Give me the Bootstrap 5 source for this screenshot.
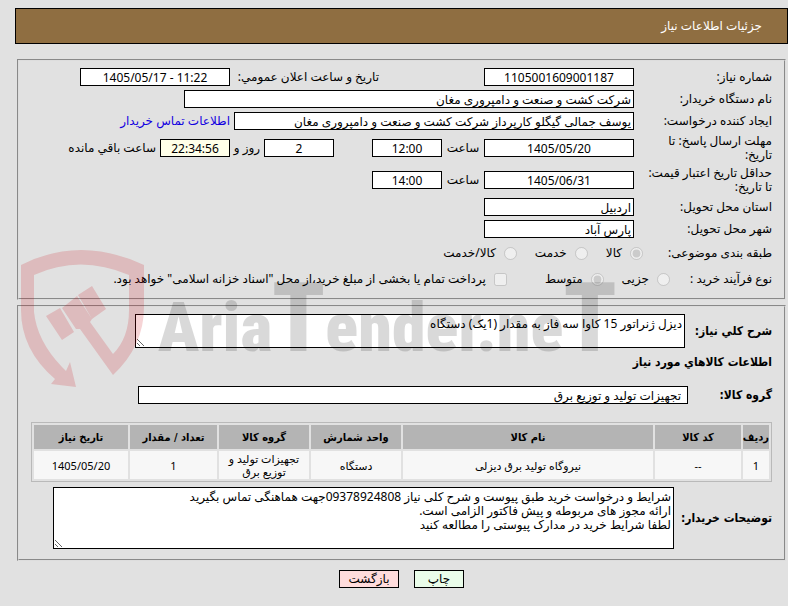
<!DOCTYPE html>
<html lang="fa" dir="rtl">
<head>
<meta charset="utf-8">
<meta name="viewport" content="width=device-width, initial-scale=1">
<title>جزئیات اطلاعات نیاز</title>
<link href="https://cdn.jsdelivr.net/npm/bootstrap@5.3.0/dist/css/bootstrap.min.css" rel="stylesheet">
<script src="https://cdn.jsdelivr.net/npm/bootstrap@5.3.0/dist/js/bootstrap.bundle.min.js" defer></script>
<style>
  body { background: #e1e1e1; color: #000; font: 12px/14px "Noto Sans", "DejaVu Sans", sans-serif; padding: 8px 0 0 15px; }
  .title-bar { background: #8f6e41; border: 1px solid #000; color: #fff; height: 36px; padding: 0 25px; }
  .panel { border: 2px groove #ddd; margin: 0 2px; padding: 5px 12px 6px; }
  .panel-need { margin-top: 15px; }
  .panel-goods { margin-top: 5px; padding: 7px 12px 10px; }
  .line { min-height: 22px; }
  .line-tall { min-height: 32px; }
  .line-choice { min-height: 26px; }
  .cap { width: 138px; flex: none; padding-left: 10px; }
  .cap-choice { width: 129px; }
  .cap-process { width: 102px; }
  .box { background: #fff; border: 1px solid #000; border-radius: 0; color: #000; height: 18px; padding: 0 2px; font-size: 12px; line-height: 16px; min-width: 0; }
  .box-date { width: 150px; text-align: center; }
  .box-short { width: 70px; text-align: center; }
  .box-place { width: 150px; }
  .box-wide { width: 450px; }
  .box-owner { width: 400px; }
  .box-group { width: 550px; padding: 0 6px; }
  .box-timer { background: #ffffe9; }
  .hour { width: 42px; text-align: center; }
  .day { width: 34px; text-align: center; }
  .announce { width: 149px; margin-right: 105px; }
  .days-box { margin-right: 38px; }
  .aside { padding-right: 4px; }
  .contact { color: #1200e0; text-decoration: none; }
  .pick { gap: 8px; margin-left: 18px; }
  .pick input { margin: 0; width: 13px; height: 13px; }
  .pick-bonds { margin-right: 20px; margin-left: 0; }
  .strong-cap { font-family: "DejaVu Sans Condensed", "DejaVu Sans", sans-serif; font-weight: 700; flex: none; }
  .goods-title { font-size: 12px; line-height: 14px; margin: 7px 0 15px; }
  .cap-desc { width: 87px; }
  .cap-group { width: 84px; }
  .cap-notes { width: 98px; }
  textarea.box { height: auto; padding: 2px; line-height: 14px; overflow: hidden; resize: both; }
  .area-desc { width: 550px; min-height: 34px; }
  .area-notes { width: 621px; min-height: 62px; }
  .goods { border: 1px solid #b9b9b9; border-collapse: separate; border-spacing: 2px; width: 100%; table-layout: fixed; font-size: 11px; line-height: 13px; text-align: center; margin: 16px 0 5px; }
  .goods th { background: #b4b4b4; height: 24px; padding: 0; font-family: "DejaVu Sans Condensed", "DejaVu Sans", sans-serif; }
  .goods td { background: #f7f7f7; height: 28px; padding: 1px 2px; }
  .act { border: 1px solid #000; height: 18px; padding: 0; font-size: 12px; line-height: 16px; color: #000; }
  .act-print { background: #eafdea; width: 50px; }
  .act-back { background: #ffdcdc; width: 60px; }
  .actions { gap: 15px; padding: 9px 0 17px; }
  .brand-mark { position: absolute; left: 20px; top: 248px; width: 610px; height: 142px; pointer-events: none; }
</style>
</head>
<body class="position-relative">
<header class="title-bar d-flex align-items-center">جزئیات اطلاعات نیاز</header>

<main>
<section class="panel panel-need">
  <div class="line d-flex align-items-center">
    <label class="cap" for="need-no">شماره نیاز:</label>
    <input class="box box-date" id="need-no" value="1105001609001187" readonly>
    <label class="announce" for="announce">تاریخ و ساعت اعلان عمومي:</label>
    <input class="box box-date" id="announce" dir="ltr" value="1405/05/17 - 11:22" readonly>
  </div>
  <div class="line d-flex align-items-center">
    <label class="cap" for="org">نام دستگاه خریدار:</label>
    <input class="box box-wide" id="org" value="شرکت کشت و صنعت و دامپروری مغان" readonly>
  </div>
  <div class="line d-flex align-items-center">
    <label class="cap" for="owner">ایجاد کننده درخواست:</label>
    <input class="box box-owner" id="owner" value="یوسف جمالی گیگلو کارپرداز شرکت کشت و صنعت و دامپروری مغان" readonly>
    <a class="contact aside" href="#">اطلاعات تماس خریدار</a>
  </div>
  <div class="line line-tall d-flex align-items-center">
    <label class="cap" for="reply-date">مهلت ارسال پاسخ: تا تاریخ:</label>
    <input class="box box-date" id="reply-date" value="1405/05/20" readonly>
    <label class="hour" for="reply-hour">ساعت</label>
    <input class="box box-short" id="reply-hour" value="12:00" readonly>
    <input class="box box-short days-box" id="days" value="2" readonly>
    <label class="day" for="days">روز و</label>
    <input class="box box-short box-timer" id="timer" value="22:34:56" readonly>
    <label class="aside" for="timer">ساعت باقي مانده</label>
  </div>
  <div class="line line-tall d-flex align-items-center">
    <label class="cap" for="valid-date">حداقل تاریخ اعتبار قیمت: تا تاریخ:</label>
    <input class="box box-date" id="valid-date" value="1405/06/31" readonly>
    <label class="hour" for="valid-hour">ساعت</label>
    <input class="box box-short" id="valid-hour" value="14:00" readonly>
  </div>
  <div class="line d-flex align-items-center">
    <label class="cap" for="province">استان محل تحویل:</label>
    <input class="box box-place" id="province" value="اردبیل" readonly>
  </div>
  <div class="line d-flex align-items-center">
    <label class="cap" for="city">شهر محل تحویل:</label>
    <input class="box box-place" id="city" value="پارس آباد" readonly>
  </div>
  <div class="line line-choice d-flex align-items-center">
    <span class="cap-choice">طبقه بندی موضوعی:</span>
    <label class="pick d-flex align-items-center"><input type="radio" name="kind" checked disabled>کالا</label>
    <label class="pick d-flex align-items-center"><input type="radio" name="kind" disabled>خدمت</label>
    <label class="pick d-flex align-items-center"><input type="radio" name="kind" disabled>کالا/خدمت</label>
  </div>
  <div class="line line-choice d-flex align-items-center">
    <span class="cap-process">نوع فرآیند خرید :</span>
    <label class="pick d-flex align-items-center"><input type="radio" name="process" disabled>جزیی</label>
    <label class="pick d-flex align-items-center"><input type="radio" name="process" checked disabled>متوسط</label>
    <label class="pick pick-bonds d-flex align-items-center"><input type="checkbox" disabled>پرداخت تمام یا بخشی از مبلغ خرید،از محل "اسناد خزانه اسلامی" خواهد بود.</label>
  </div>
</section>

<section class="panel panel-goods">
  <div class="d-flex align-items-center">
    <label class="strong-cap cap-desc" for="desc">شرح کلي نیاز:</label>
    <textarea class="box area-desc" id="desc" rows="2" readonly>دیزل ژنراتور 15 کاوا سه فاز به مقدار (1یک) دستگاه</textarea>
  </div>
  <h2 class="strong-cap goods-title">اطلاعات کالاهاي مورد نیاز</h2>
  <div class="line d-flex align-items-center">
    <label class="strong-cap cap-group" for="group">گروه کالا:</label>
    <input class="box box-group" id="group" value="تجهیزات تولید و توزیع برق" readonly>
  </div>
  <table class="goods">
    <colgroup><col style="width:26px"><col style="width:86px"><col><col style="width:90px"><col style="width:90px"><col style="width:87px"><col style="width:94px"></colgroup>
    <thead><tr><th>ردیف</th><th>کد کالا</th><th>نام کالا</th><th>واحد شمارش</th><th>گروه کالا</th><th>تعداد / مقدار</th><th>تاریخ نیاز</th></tr></thead>
    <tbody><tr><td>1</td><td>--</td><td>نیروگاه تولید برق دیزلی</td><td>دستگاه</td><td>تجهیزات تولید و توزیع برق</td><td>1</td><td>1405/05/20</td></tr></tbody>
  </table>
  <div class="d-flex align-items-center">
    <label class="strong-cap cap-notes" for="notes">توضیحات خریدار:</label>
    <textarea class="box area-notes" id="notes" rows="4" readonly>شرایط و درخواست خرید طبق پیوست و شرح کلی نیاز 09378924808جهت هماهنگی تماس بگیرید
ارائه مجوز های مربوطه و پیش فاکتور الزامی است.
لطفا شرایط خرید در مدارک پیوستی را مطالعه کنید</textarea>
  </div>
</section>
</main>

<div class="d-flex justify-content-center actions">
  <button type="button" class="act act-print">چاپ</button>
  <button type="button" class="act act-back">بازگشت</button>
</div>

<svg class="brand-mark" viewBox="0 0 610 142" direction="ltr" aria-hidden="true">
  <g fill="#c8000c" fill-opacity=".17">
    <path fill-rule="evenodd" d="M1 17Q60-13 124 17V59Q124 98 93 127L60 81L56 81L42 60L57 48L72 71L70 74L93 106Q109 90 109 62V27Q60 6 14 27V64Q17 93 42 119L46 123L50 114L56 139L31 136L35 131Q1 102 1 62Z"/>
    <path d="M26 68L40 60L54 84L42 92ZM58 47L72 38L86 61L72 71Z"/>
  </g>
  <text x="138" y="103" fill="#000" fill-opacity=".15" font-family="Roboto Condensed, Roboto, sans-serif" font-weight="900" font-size="68">Aria<tspan font-size="96">T</tspan>ender.ne<tspan font-size="96">T</tspan></text>
</svg>
</body>
</html>
